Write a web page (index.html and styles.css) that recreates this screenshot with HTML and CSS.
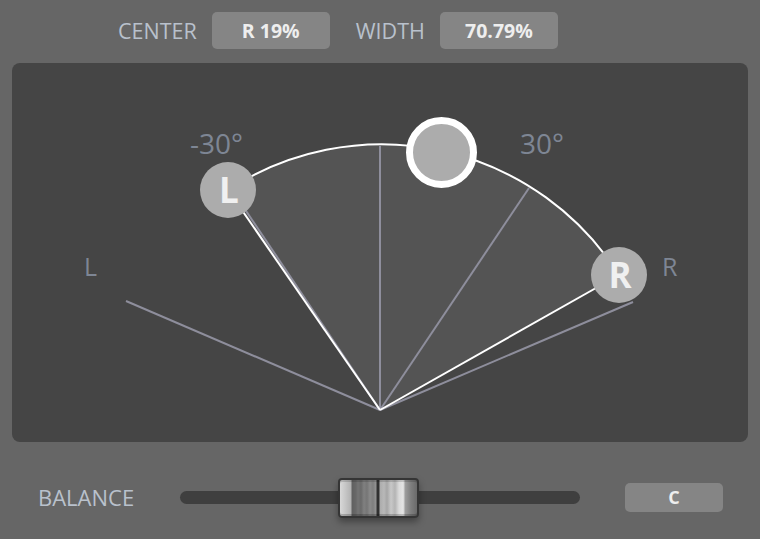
FILE: index.html
```
<!DOCTYPE html>
<html>
<head>
<meta charset="utf-8">
<link rel="stylesheet" href="styles.css">
</head>
<body>
<div class="topbar">
  <span class="label">CENTER</span>
  <div class="valbox first">R 19%</div>
  <span class="label second">WIDTH</span>
  <div class="valbox">70.79%</div>
</div>
<div class="panel">
  <svg class="fan" width="736" height="379" viewBox="12 63 736 379" xmlns="http://www.w3.org/2000/svg">
    <path class="sector" d="M380 410 L228 190 A281 281 0 0 1 619 275 Z"/>
    <line class="gline" x1="380" y1="410" x2="126" y2="301"/>
    <line class="gline" x1="380" y1="410" x2="633" y2="302"/>
    <line class="gline" x1="380" y1="410" x2="232" y2="190"/>
    <line class="gline" x1="380" y1="410" x2="529" y2="188"/>
    <line class="gline" x1="380" y1="410" x2="380" y2="146"/>
    <line class="wline" x1="380" y1="410" x2="228" y2="190"/>
    <line class="wline" x1="380" y1="410" x2="619" y2="275"/>
    <path class="warc" d="M228 190 A281 281 0 0 1 619 275"/>
    <circle class="spk" cx="228" cy="190" r="28"/>
    <circle class="spk" cx="619" cy="275" r="28"/>
    <circle class="knob" cx="441.5" cy="152.5" r="32"/>
    <text class="deg" x="190" y="154">-30°</text>
    <text class="deg" x="520" y="154">30°</text>
    <text class="side" x="84" y="276">L</text>
    <text class="side" x="662" y="276">R</text>
    <text class="spktxt" x="229" y="203">L</text>
    <text class="spktxt" x="620" y="288">R</text>
  </svg>
</div>
<div class="bottom">
  <span class="label bal">BALANCE</span>
  <div class="track"><div class="thumb"></div></div>
  <div class="valbox cbox">C</div>
</div>
</body>
</html>
```
FILE: styles.css
```
html, body {
  margin: 0;
  padding: 0;
}
body {
  width: 760px;
  height: 539px;
  overflow: hidden;
  background: #666666;
  font-family: "Open Sans", "Noto Sans", sans-serif;
}
.topbar {
  display: flex;
  align-items: center;
  height: 37px;
  padding: 12px 0 0 118px;
}
.label {
  font-size: 21.5px;
  color: #b9c1cc;
  line-height: 1;
}
.valbox {
  width: 118px;
  height: 37px;
  background: #858585;
  border-radius: 5px;
  display: flex;
  align-items: center;
  justify-content: center;
  font-weight: 700;
  font-size: 19.5px;
  color: #eeeeee;
}
.valbox.first {
  margin-left: 15px;
}
.label.second {
  margin-left: 26px;
  margin-right: 15px;
}
.panel {
  margin: 14px 12px 0;
  height: 379px;
  background: #454545;
  border-radius: 8px;
  overflow: hidden;
}
.fan {
  display: block;
}
.sector {
  fill: #545454;
}
.gline {
  stroke: #8e8e9c;
  stroke-width: 2;
}
.wline, .warc {
  stroke: #ffffff;
  stroke-width: 2;
  fill: none;
}
.spk {
  fill: #acacac;
}
.knob {
  fill: #acacac;
  stroke: #ffffff;
  stroke-width: 7;
}
.deg {
  font-family: "Open Sans", sans-serif;
  font-size: 28px;
  fill: #7e8694;
}
.side {
  font-family: "Open Sans", sans-serif;
  font-size: 25px;
  fill: #7e8694;
}
.spktxt {
  font-family: "Open Sans", sans-serif;
  font-weight: 700;
  font-size: 35px;
  fill: #f0f0f0;
  text-anchor: middle;
}
.bottom {
  display: flex;
  align-items: center;
  height: 40px;
  margin-top: 35px;
  padding-left: 38px;
}
.label.bal {
  width: 142px;
  font-size: 22px;
}
.track {
  position: relative;
  width: 400px;
  height: 13px;
  background: #3f3f3f;
  border-radius: 7px;
}
.thumb {
  position: absolute;
  left: 158px;
  top: -13px;
  width: 81px;
  height: 40px;
  box-sizing: border-box;
  border: 2px solid #353535;
  border-radius: 4px;
  box-shadow: 0 4px 7px rgba(0, 0, 0, 0.35), inset 0 2px 0 rgba(0,0,0,0.15), inset 0 -2px 0 rgba(0,0,0,0.2);
  background: linear-gradient(to right,
    #d8d8d8 0px, #c4c4c4 6px, #b2b2b2 11px,
    #606060 12px, #686868 16px, #747474 18px, #6a6a6a 21px,
    #808080 24px, #767676 27px, #8a8a8a 30px, #7e7e7e 33px, #929292 36px,
    #303030 37px, #303030 39px,
    #acacac 40px, #b8b8b8 44px, #a6a6a6 47px, #c8c8c8 51px,
    #b4b4b4 55px, #dadada 59px, #e4e4e4 63px, #d2d2d2 64px,
    #9e9e9e 65px, #7e7e7e 71px, #6a6a6a 77px);
}
.cbox {
  margin-left: 45px;
  width: 98px;
  height: 29px;
  font-size: 18px;
}
```
